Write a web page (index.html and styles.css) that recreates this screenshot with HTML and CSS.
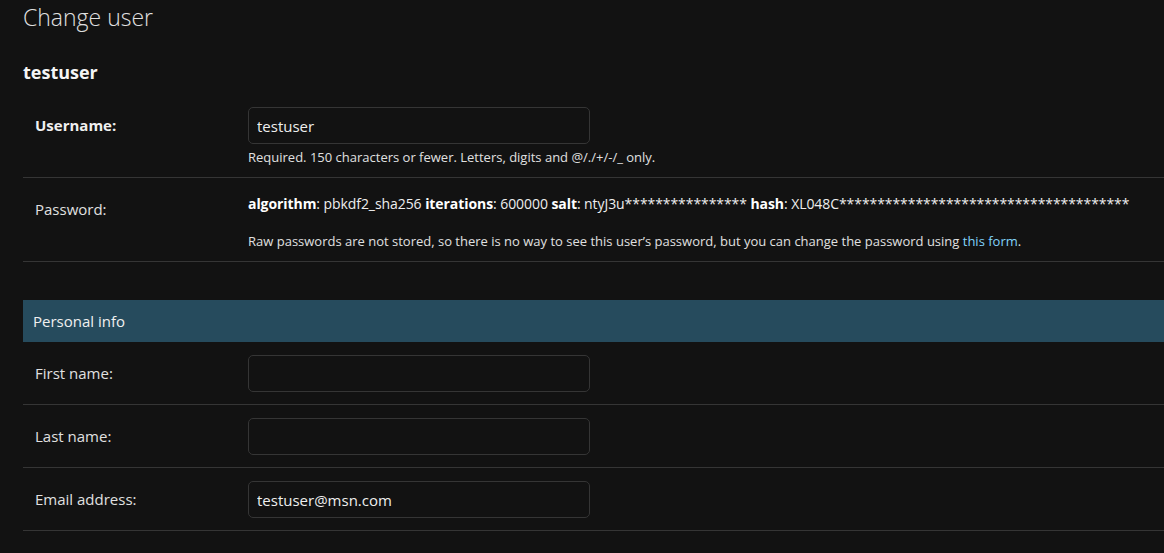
FILE: index.html
```html
<!DOCTYPE html>
<html lang="en">
<head>
<meta charset="utf-8">
<title>Change user</title>
<link rel="stylesheet" href="styles.css">
</head>
<body>
<div class="content">
  <h1 class="title">Change user</h1>
  <h2 class="subtitle">testuser</h2>
  <fieldset class="module">
    <div class="form-row">
      <label class="label required">Username:</label>
      <div class="field">
        <input class="text-input" type="text" value="testuser">
        <div class="help">Required. 150 characters or fewer. Letters, digits and @/./+/-/_ only.</div>
      </div>
    </div>
    <div class="form-row">
      <label class="label">Password:</label>
      <div class="field">
        <div class="hash-line"><strong>algorithm</strong>: pbkdf2_sha256 <strong>iterations</strong>: 600000 <strong>salt</strong>: ntyJ3u**************** <strong>hash</strong>: XL048C**************************************</div>
        <div class="help help-pw">Raw passwords are not stored, so there is no way to see this user’s password, but you can change the password using <a class="link" href="#">this form</a>.</div>
      </div>
    </div>
  </fieldset>
  <fieldset class="module module-personal">
    <div class="caption">Personal info</div>
    <div class="form-row">
      <label class="label">First name:</label>
      <div class="field"><input class="text-input" type="text" value=""></div>
    </div>
    <div class="form-row">
      <label class="label">Last name:</label>
      <div class="field"><input class="text-input" type="text" value=""></div>
    </div>
    <div class="form-row">
      <label class="label">Email address:</label>
      <div class="field"><input class="text-input" type="text" value="testuser@msn.com"></div>
    </div>
  </fieldset>
</div>
</body>
</html>
```

FILE: styles.css
```css
html, body {
  margin: 0;
  padding: 0;
  background: #121212;
  color: #eeeeee;
  font-family: "Open Sans", "Noto Sans", sans-serif;
  overflow: hidden;
}

.content {
  padding: 0 0 0 23px;
}

.title {
  margin: 0;
  padding-top: 1px;
  font-size: 23px;
  line-height: 32px;
  font-weight: 300;
  color: #e0e0e0;
}

.subtitle {
  margin: 27px 0 10px 0;
  font-size: 18px;
  line-height: 24px;
  font-weight: 700;
  color: #f5f5f5;
}

.module {
  border: 0;
  margin: 0;
  padding: 0;
  min-width: 0;
}

.form-row {
  display: flex;
  align-items: flex-start;
  padding: 13px 0 12px 12px;
  border-bottom: 1px solid #353535;
}

.label {
  width: 213px;
  flex: none;
  font-size: 15px;
  line-height: 20px;
  padding-top: 8px;
  color: #e0e0e0;
}

.label.required {
  font-weight: 700;
  color: #f0f0f0;
}

.field {
  flex: 1;
  min-width: 0;
}

.text-input {
  display: block;
  box-sizing: border-box;
  width: 342px;
  height: 37px;
  margin: 0;
  padding: 0 8px;
  background: #121212;
  border: 1px solid #353535;
  border-radius: 5px;
  color: #eeeeee;
  font-family: inherit;
  font-size: 15px;
  outline: none;
}

.help {
  font-size: 13px;
  line-height: 16px;
  color: #e0e0e0;
  margin-top: 5px;
}

.hash-line {
  font-size: 14px;
  line-height: 20px;
  padding-top: 3px;
  letter-spacing: -0.07px;
  white-space: nowrap;
  color: #eeeeee;
}

.hash-line strong {
  color: #ffffff;
}

.help-pw {
  margin-top: 19px;
}

.link {
  color: #81d4fa;
  text-decoration: none;
}

.module-personal {
  margin-top: 38px;
}

.caption {
  background: #264b5d;
  color: #f0f0f0;
  font-size: 15px;
  line-height: 42px;
  height: 42px;
  padding-left: 10px;
}
```
